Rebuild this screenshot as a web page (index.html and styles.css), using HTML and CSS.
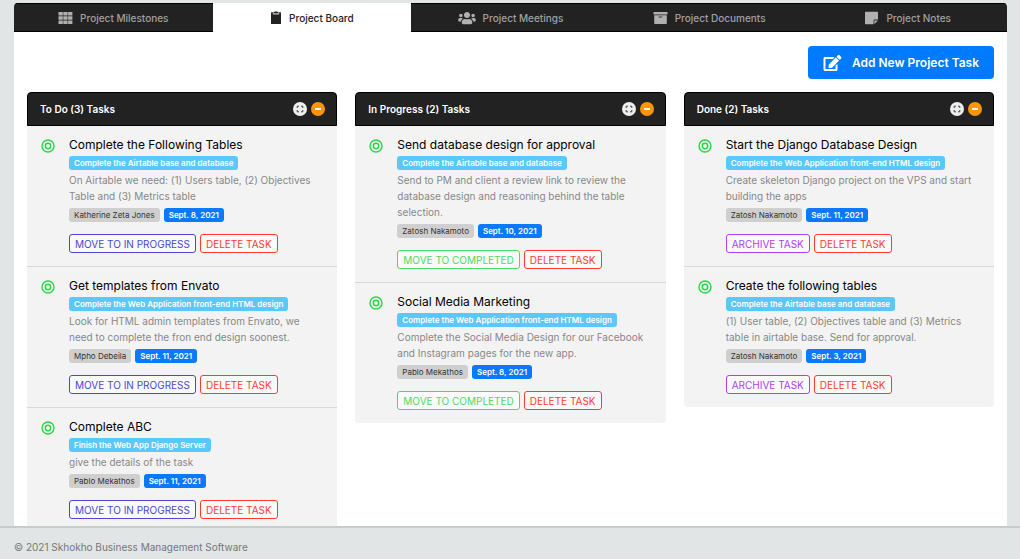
FILE: index.html
```html
<!DOCTYPE html>
<html lang="en">
<head>
<meta charset="utf-8">
<meta name="viewport" content="width=device-width, initial-scale=1">
<title>Project Board</title>
<link rel="stylesheet" href="styles.css">
</head>
<body class="page">
<svg class="sprite" aria-hidden="true">
  <symbol id="target" viewBox="0 0 14 14"><circle cx="7" cy="7" r="6" fill="none" stroke="currentColor" stroke-width="1.400"/><circle cx="7" cy="7" r="2.700" fill="none" stroke="currentColor" stroke-width="1.500"/></symbol>
  <symbol id="expand" viewBox="0 0 14 14"><path d="M4.200 6V4.200H6M8 4.200h1.800V6M9.800 8v1.800H8M6 9.800H4.200V8" fill="none" stroke="#444" stroke-width="1"/></symbol>
  <symbol id="minus" viewBox="0 0 14 14"><path d="M4 7h6" stroke="#fff" stroke-width="2"/></symbol>
</svg>
<main class="panel">
  <nav class="tabs" aria-label="Project sections">
    <a class="tab" href="#milestones"><svg class="tab-icon" viewBox="0 0 15 14"><g fill="currentColor"><path d="M.5 1h4.300v3.600H.5zM5.300 1h4.300v3.600H5.300zM10.100 1h4.300v3.600h-4.300zM.5 5.200h4.300v3.600H.5zM5.300 5.200h4.300v3.600H5.300zM10.100 5.200h4.300v3.600h-4.300zM.5 9.400h4.300V13H.5zM5.300 9.400h4.300V13H5.300zM10.100 9.400h4.300V13h-4.300z"/></g></svg>Project Milestones</a>
    <a class="tab tab-active" href="#board" aria-current="page"><svg class="tab-icon tab-icon-clip" viewBox="0 0 12 15"><path d="M1.600 2.200h2V4h4.800V2.200h2q.6 0 .6.6v10.600q0 .6-.6.6H1.600q-.6 0-.6-.6V2.800q0-.6.6-.6z" fill="#222"/><path d="M3.800 3.500V1.800h1.200a1.100 1.100 0 0 1 2 0h1.200v1.700z" fill="#222"/><path d="M3.200 2.600v1.700h5.600V2.600" fill="none" stroke="#fff" stroke-width=".5"/></svg>Project Board</a>
    <a class="tab" href="#meetings"><svg class="tab-icon tab-icon-users" viewBox="0 0 640 512"><path fill="currentColor" d="M96 224c35.300 0 64-28.700 64-64s-28.700-64-64-64-64 28.700-64 64 28.700 64 64 64zm448 0c35.300 0 64-28.700 64-64s-28.700-64-64-64-64 28.700-64 64 28.700 64 64 64zm32 32h-64c-17.600 0-33.500 7.100-45.100 18.600 40.300 22.100 68.900 62 75.100 109.400h66c17.700 0 32-14.300 32-32v-32c0-35.300-28.700-64-64-64zm-256 0c61.900 0 112-50.100 112-112S381.900 32 320 32 208 82.100 208 144s50.100 112 112 112zm76.800 32h-8.300c-20.800 10-43.900 16-68.500 16s-47.600-6-68.500-16h-8.300C179.600 288 128 339.600 128 403.200V432c0 26.500 21.500 48 48 48h288c26.500 0 48-21.500 48-48v-28.800c0-63.600-51.600-115.200-115.200-115.200zm-223.700-13.400C161.500 263.100 145.600 256 128 256H64c-35.300 0-64 28.700-64 64v32c0 17.700 14.300 32 32 32h65.900c6.300-47.400 34.900-87.300 75.200-109.400z"/></svg>Project Meetings</a>
    <a class="tab" href="#documents"><svg class="tab-icon" viewBox="0 0 15 14"><path d="M.5 1h14v2.600H.5z" fill="currentColor"/><path d="M1.200 4.200h12.600v8q0 .8-.8.8H2q-.8 0-.8-.8z" fill="currentColor"/><path d="M5.700 6h3.600" stroke="#222" stroke-width=".9"/></svg>Project Documents</a>
    <a class="tab" href="#notes"><svg class="tab-icon" viewBox="0 0 15 14"><path d="M1.800.8h11.400q.8 0 .8.8v7H10.500q-.9 0-.9.900v3.700H1.800q-.8 0-.8-.8V1.600q0-.8.8-.8z" fill="currentColor"/><path d="M10.400 13V9.500H14z" fill="currentColor"/></svg>Project Notes</a>
  </nav>
  <div class="content">
    <div class="toolbar"><button class="add" type="button"><svg class="add-icon" viewBox="0 0 576 512"><path fill="currentColor" d="M402.600 83.200l90.200 90.200c3.800 3.800 3.800 10 0 13.800L274.400 405.600l-92.800 10.300c-12.400 1.400-22.900-9.100-21.500-21.500l10.300-92.800L388.800 83.200c3.800-3.800 10-3.800 13.800 0zm162-22.900l-48.800-48.800c-15.200-15.200-39.900-15.200-55.200 0l-35.400 35.400c-3.800 3.800-3.800 10 0 13.800l90.200 90.200c3.800 3.800 10 3.800 13.800 0l35.400-35.400c15.200-15.300 15.200-40 0-55.200zM384 346.200V448H64V128h229.800c3.200 0 6.200-1.300 8.500-3.500l40-40c7.600-7.600 2.200-20.500-8.500-20.500H48C21.500 64 0 85.500 0 112v352c0 26.500 21.500 48 48 48h352c26.500 0 48-21.500 48-48V306.200c0-10.700-12.900-16-20.500-8.500l-40 40c-2.200 2.300-3.500 5.300-3.500 8.500z"/></svg>Add New Project Task</button></div>
    <div class="board">
      <section class="column">
        <header class="column-head"><h2 class="column-title">To Do (3) Tasks</h2><button class="round" type="button" aria-label="Expand"><svg viewBox="0 0 14 14"><use href="#expand"/></svg></button><button class="round round-orange" type="button" aria-label="Collapse"><svg viewBox="0 0 14 14"><use href="#minus"/></svg></button></header>
        <article class="task">
          <svg class="target" viewBox="0 0 14 14"><use href="#target"/></svg>
          <div class="task-body">
            <h3 class="task-title">Complete the Following Tables</h3>
            <div class="row"><span class="badge badge-sky">Complete the Airtable base and database</span></div>
            <p class="desc">On Airtable we need: (1) Users table, (2) Objectives Table and (3) Metrics table</p>
            <div class="row meta"><span class="badge badge-gray">Katherine Zeta Jones</span><span class="badge badge-blue">Sept. 8, 2021</span></div>
            <div class="row"><button class="action indigo" type="button">MOVE TO IN PROGRESS</button><button class="action red" type="button">DELETE TASK</button></div>
          </div>
        </article>
        <article class="task">
          <svg class="target" viewBox="0 0 14 14"><use href="#target"/></svg>
          <div class="task-body">
            <h3 class="task-title">Get templates from Envato</h3>
            <div class="row"><span class="badge badge-sky">Complete the Web Application front-end HTML design</span></div>
            <p class="desc">Look for HTML admin templates from Envato, we need to complete the fron end design soonest.</p>
            <div class="row meta"><span class="badge badge-gray">Mpho Debeila</span><span class="badge badge-blue">Sept. 11, 2021</span></div>
            <div class="row"><button class="action indigo" type="button">MOVE TO IN PROGRESS</button><button class="action red" type="button">DELETE TASK</button></div>
          </div>
        </article>
        <article class="task">
          <svg class="target" viewBox="0 0 14 14"><use href="#target"/></svg>
          <div class="task-body">
            <h3 class="task-title">Complete ABC</h3>
            <div class="row"><span class="badge badge-sky">Finish the Web App Django Server</span></div>
            <p class="desc">give the details of the task</p>
            <div class="row meta"><span class="badge badge-gray">Pablo Mekathos</span><span class="badge badge-blue">Sept. 11, 2021</span></div>
            <div class="row"><button class="action indigo" type="button">MOVE TO IN PROGRESS</button><button class="action red" type="button">DELETE TASK</button></div>
          </div>
        </article>
      </section>
      <section class="column">
        <header class="column-head"><h2 class="column-title">In Progress (2) Tasks</h2><button class="round" type="button" aria-label="Expand"><svg viewBox="0 0 14 14"><use href="#expand"/></svg></button><button class="round round-orange" type="button" aria-label="Collapse"><svg viewBox="0 0 14 14"><use href="#minus"/></svg></button></header>
        <article class="task">
          <svg class="target" viewBox="0 0 14 14"><use href="#target"/></svg>
          <div class="task-body">
            <h3 class="task-title">Send database design for approval</h3>
            <div class="row"><span class="badge badge-sky">Complete the Airtable base and database</span></div>
            <p class="desc">Send to PM and client a review link to review the database design and reasoning behind the table selection.</p>
            <div class="row meta"><span class="badge badge-gray">Zatosh Nakamoto</span><span class="badge badge-blue">Sept. 10, 2021</span></div>
            <div class="row"><button class="action green" type="button">MOVE TO COMPLETED</button><button class="action red" type="button">DELETE TASK</button></div>
          </div>
        </article>
        <article class="task">
          <svg class="target" viewBox="0 0 14 14"><use href="#target"/></svg>
          <div class="task-body">
            <h3 class="task-title">Social Media Marketing</h3>
            <div class="row"><span class="badge badge-sky">Complete the Web Application front-end HTML design</span></div>
            <p class="desc">Complete the Social Media Design for our Facebook and Instagram pages for the new app.</p>
            <div class="row meta"><span class="badge badge-gray">Pablo Mekathos</span><span class="badge badge-blue">Sept. 8, 2021</span></div>
            <div class="row"><button class="action green" type="button">MOVE TO COMPLETED</button><button class="action red" type="button">DELETE TASK</button></div>
          </div>
        </article>
      </section>
      <section class="column">
        <header class="column-head"><h2 class="column-title">Done (2) Tasks</h2><button class="round" type="button" aria-label="Expand"><svg viewBox="0 0 14 14"><use href="#expand"/></svg></button><button class="round round-orange" type="button" aria-label="Collapse"><svg viewBox="0 0 14 14"><use href="#minus"/></svg></button></header>
        <article class="task">
          <svg class="target" viewBox="0 0 14 14"><use href="#target"/></svg>
          <div class="task-body">
            <h3 class="task-title">Start the Django Database Design</h3>
            <div class="row"><span class="badge badge-sky">Complete the Web Application front-end HTML design</span></div>
            <p class="desc">Create skeleton Django project on the VPS and start building the apps</p>
            <div class="row meta"><span class="badge badge-gray">Zatosh Nakamoto</span><span class="badge badge-blue">Sept. 11, 2021</span></div>
            <div class="row"><button class="action purple" type="button">ARCHIVE TASK</button><button class="action red" type="button">DELETE TASK</button></div>
          </div>
        </article>
        <article class="task">
          <svg class="target" viewBox="0 0 14 14"><use href="#target"/></svg>
          <div class="task-body">
            <h3 class="task-title">Create the following tables</h3>
            <div class="row"><span class="badge badge-sky">Complete the Airtable base and database</span></div>
            <p class="desc">(1) User table, (2) Objectives table and (3) Metrics table in airtable base. Send for approval.</p>
            <div class="row meta"><span class="badge badge-gray">Zatosh Nakamoto</span><span class="badge badge-blue">Sept. 3, 2021</span></div>
            <div class="row"><button class="action purple" type="button">ARCHIVE TASK</button><button class="action red" type="button">DELETE TASK</button></div>
          </div>
        </article>
      </section>
    </div>
  </div>
</main>
<footer class="footer">© 2021 Skhokho Business Management Software</footer>
</body>
</html>
```
FILE: styles.css
```css
* { box-sizing: border-box; }
.page {
  margin: 0;
  height: 100vh;
  display: flex;
  flex-direction: column;
  background: #e1e5e6;
  font-family: Inter, "Liberation Sans", sans-serif;
  color: #111;
}
.sprite { display: none; }
.panel {
  flex: 1;
  min-height: 0;
  overflow: hidden;
  margin: 3px 13px 0 14px;
  background: #fff;
  border-radius: 4px 4px 0 0;
}
.tabs {
  display: grid;
  grid-template-columns: repeat(5, 1fr);
}
.tab {
  display: flex;
  align-items: center;
  justify-content: center;
  gap: 7px;
  height: 29px;
  background: #222;
  border-top: 1px solid #000;
  border-bottom: 1px solid #000;
  color: #a0a0a0;
  font-size: 10px;
  font-weight: 500;
  text-decoration: none;
}
.tab-active {
  background: #fff;
  border-color: #fff;
  color: #222;
}
.tab-icon { width: 15px; height: 14px; color: #b0b0b0; }
.tab-icon-clip { width: 12px; height: 15px; }
.tab-icon-users { width: 18px; height: 14px; }
.content { padding: 14px 13px; }
.toolbar { display: flex; justify-content: flex-end; margin-bottom: 13px; }
.add {
  display: flex;
  align-items: center;
  gap: 10px;
  height: 33px;
  padding: 0 15px;
  border: 0;
  border-radius: 4px;
  background: #007aff;
  color: #fff;
  font: 600 12px Inter, sans-serif;
}
.add-icon { width: 19px; height: 16px; }
.board {
  display: grid;
  grid-template-columns: repeat(3, 1fr);
  gap: 18px;
  align-items: start;
}
.column {
  background: #f3f3f3;
  border-radius: 4px;
  overflow: hidden;
}
.column-head {
  display: flex;
  align-items: center;
  gap: 4px;
  height: 34px;
  padding: 0 11px 0 12px;
  background: #222;
  border: 1px solid #000;
  border-radius: 4px 4px 0 0;
}
.column-title {
  flex: 1;
  margin: 0;
  color: #fff;
  font-size: 10px;
  font-weight: 600;
}
.round {
  display: flex;
  width: 14px;
  height: 14px;
  padding: 0;
  border: 0;
  border-radius: 50%;
  background: #eee;
}
.round svg { width: 14px; height: 14px; }
.round-orange { background: #ff9500; }
.task {
  display: flex;
  gap: 14px;
  padding: 10px 14px 13px;
  border-bottom: 1px solid #d8d8d8;
}
.task:last-child { border-bottom: 0; }
.target {
  flex: none;
  width: 14px;
  height: 14px;
  margin-top: 3px;
  color: #28d747;
}
.task-body { flex: 1; min-width: 0; }
.task-title {
  margin: 0 0 2px;
  font-size: 12px;
  line-height: 18px;
  font-weight: 400;
  color: #000;
}
.row { display: flex; gap: 4px; }
.badge {
  height: 14px;
  padding: 0 5px;
  border-radius: 3px;
  font-size: 8px;
  line-height: 14px;
  font-weight: 600;
  color: #fff;
}
.badge-sky { background: #5ac8fa; }
.badge-gray { background: #cfcfcf; color: #333; font-weight: 400; }
.badge-blue { background: #0a78ff; }
.desc {
  margin: 2px 0 4px;
  font-size: 10px;
  line-height: 16px;
  color: #888;
}
.meta { margin-bottom: 12px; }
.action {
  height: 19px;
  padding: 0 5px;
  border: 1px solid currentColor;
  border-radius: 3px;
  background: #fafafa;
  font: 400 10px Inter, sans-serif;
}
.indigo { color: #4a48d0; }
.red { color: #ff3b30; }
.green { color: #4cd964; }
.purple { color: #af3ff0; }
.footer {
  height: 33px;
  padding: 7px 14px 0;
  border-top: 2px solid #c8cccc;
  color: #777;
  font-size: 10px;
  line-height: 24px;
}
```
